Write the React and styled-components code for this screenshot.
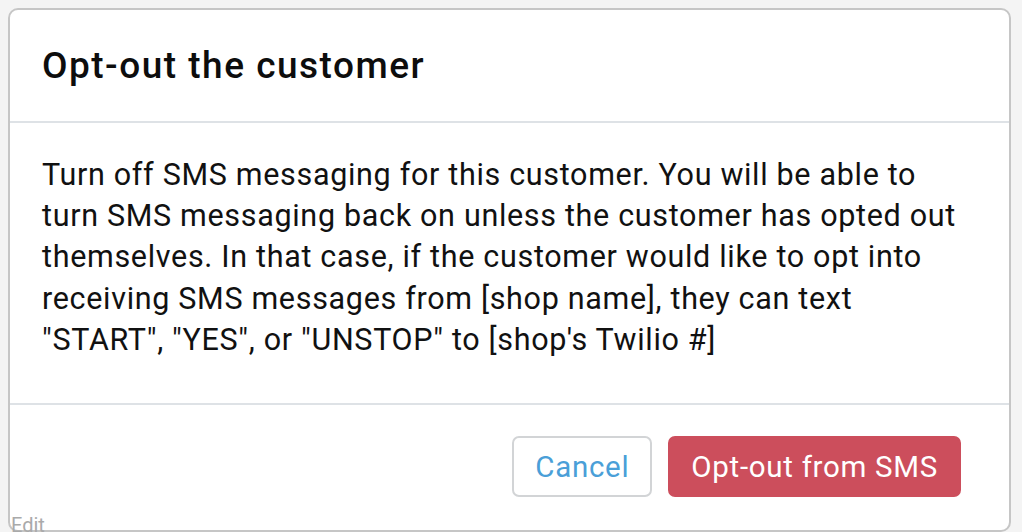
import React from "react";
import styled, { createGlobalStyle } from "styled-components";

const GlobalStyle = createGlobalStyle`
  html, body {
    margin: 0;
    padding: 0;
    background: #f4f4f4;
    font-family: Roboto, "Liberation Sans", sans-serif;
    color: #111;
  }
`;

const Page = styled.div`
  position: relative;
  width: 1022px;
  height: 532px;
  padding: 8px 11px 0 8px;
  box-sizing: border-box;
  overflow: hidden;
`;

const Modal = styled.div`
  background: #fff;
  border: 2px solid #c6c6c6;
  border-radius: 10px;
  height: 524px;
  box-sizing: border-box;
  display: flex;
  flex-direction: column;
`;

const Header = styled.div`
  height: 111px;
  padding: 0 32px;
  display: flex;
  align-items: center;
  border-bottom: 2px solid #dee2e6;
`;

const Title = styled.h2`
  margin: 0;
  font-size: 37px;
  font-weight: 500;
  letter-spacing: 1.5px;
  color: #0d0d0d;
`;

const Body = styled.div`
  padding: 31px 48px 43px 32px;
  border-bottom: 2px solid #dee2e6;
`;

const Text = styled.p`
  margin: 0;
  font-size: 30.5px;
  line-height: 41.2px;
  letter-spacing: 0.68px;
  color: #111;
`;

const Footer = styled.div`
  flex: 1;
  display: flex;
  justify-content: flex-end;
  align-items: center;
  gap: 16px;
  padding: 0 48px 2px 0;
`;

const Button = styled.button`
  height: 61px;
  padding: 0 21px;
  border-radius: 7px;
  font-family: Roboto, "Liberation Sans", sans-serif;
  font-size: 29.5px;
  letter-spacing: 0.7px;
  cursor: pointer;
  border: 2px solid ${(p) => (p.$primary ? "#cc4e5c" : "#d2d4d6")};
  background: ${(p) => (p.$primary ? "#cc4e5c" : "#fff")};
  color: ${(p) => (p.$primary ? "#fff" : "#4a9fd8")};
`;

const EditLabel = styled.span`
  position: absolute;
  left: 11px;
  top: 513px;
  font-size: 20px;
  color: #aaa;
`;

export default function App() {
  return (
    <>
      <GlobalStyle />
      <Page>
        <Modal>
          <Header>
            <Title>Opt-out the customer</Title>
          </Header>
          <Body>
            <Text>
              Turn off SMS messaging for this customer. You will be able to
              turn SMS messaging back on unless the customer has opted out
              themselves. In that case, if the customer would like to opt into
              receiving SMS messages from [shop name], they can text "START",
              "YES", or "UNSTOP" to [shop's Twilio #]
            </Text>
          </Body>
          <Footer>
            <Button>Cancel</Button>
            <Button $primary>Opt-out from SMS</Button>
          </Footer>
        </Modal>
        <EditLabel>Edit</EditLabel>
      </Page>
    </>
  );
}
